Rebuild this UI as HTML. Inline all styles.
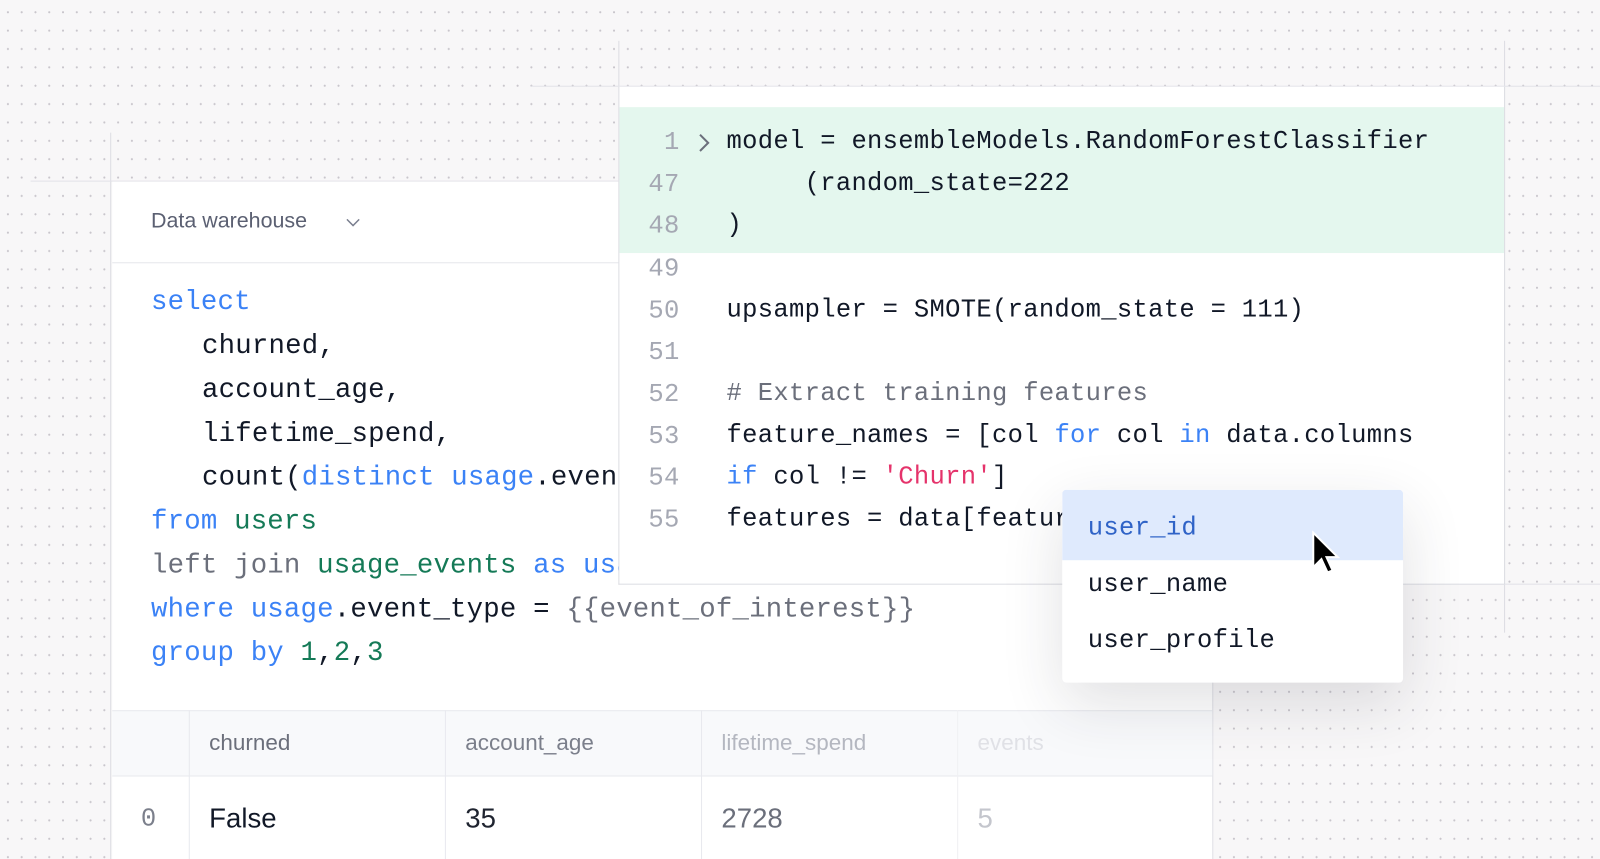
<!DOCTYPE html>
<html><head><style>
*{margin:0;padding:0;box-sizing:border-box}
body{width:1600px;height:859px;overflow:hidden;position:relative;background:#f8f7f8}
#w{position:absolute;left:0;top:0;width:1568px;height:842px;transform:scale(1.0204);transform-origin:0 0;background-color:#f8f7f8;
background-image:radial-gradient(circle,#c9c6cc 0.9px,transparent 1.2px);background-size:13.5px 18px;background-position:1px 3px;
font-family:"Liberation Mono",monospace;overflow:hidden}
.p{position:absolute;background:#fff}
.m{font-family:"Liberation Mono",monospace;font-size:25px;white-space:pre;position:absolute;color:#111827;letter-spacing:0.3px}
.L{font-size:26.8px;letter-spacing:0.2px}
.s{font-family:"Liberation Sans",sans-serif}
.b{color:#3b82f6}.g{color:#157a57}.gr{color:#6b6f7b}.pk{color:#e5336b}
.ln{color:#a5a8b3;width:50px;text-align:right;left:616px}
.vl{position:absolute;background:#dcdde3}
</style></head><body><div id="w">
<div class="vl" style="left:606px;top:40px;width:1px;height:46px"></div>
<div class="vl" style="left:1474px;top:40px;width:1px;height:580px"></div>
<div class="vl" style="left:520px;top:84px;width:1080px;height:1px;background:#e2e2e8"></div>
<div class="vl" style="left:108px;top:130px;width:1px;height:729px"></div>
<div class="vl" style="left:30px;top:177px;width:580px;height:1px;background:#e2e2e8"></div>
<div class="vl" style="left:1188px;top:572px;width:1px;height:287px"></div>
<div class="vl" style="left:1188px;top:572px;width:412px;height:1px;background:#e2e2e8"></div>

<div class="p" style="left:110px;top:178px;width:1078px;height:681px">
 <div style="position:absolute;left:0;top:0;width:100%;height:80px;border-bottom:1px solid #e6e7ec"></div>
 <div class="s" style="position:absolute;left:38px;top:27px;font-size:21px;color:#5b6072">Data warehouse</div>
 <svg style="position:absolute;left:228px;top:34px" width="16" height="12"><path d="M2 3l6 6 6-6" fill="none" stroke="#7a7f8f" stroke-width="1.5"/></svg>
 <div style="position:absolute;left:0;top:518px;width:100%;height:65px;background:#f8f9fb;border-top:1px solid #e8e9ee;border-bottom:1px solid #e8e9ee"></div>
 <div style="position:absolute;left:75px;top:518px;width:1px;height:163px;background:#e8e9ee"></div>
 <div style="position:absolute;left:326px;top:518px;width:1px;height:163px;background:#e8e9ee"></div>
 <div style="position:absolute;left:577px;top:518px;width:1px;height:163px;background:#e8e9ee"></div>
 <div style="position:absolute;left:828px;top:518px;width:1px;height:163px;background:#f0f0f3"></div>
 <div class="s" style="position:absolute;top:537px;left:95px;font-size:22px;color:#6b6f7b">churned</div>
 <div class="s" style="position:absolute;top:537px;left:346px;font-size:22px;color:#7b7f8b">account_age</div>
 <div class="s" style="position:absolute;top:537px;left:597px;font-size:22px;color:#b4b7c0">lifetime_spend</div>
 <div class="s" style="position:absolute;top:537px;left:848px;font-size:22px;color:#e0e1e6">events</div>
 <div class="m" style="top:610px;left:28px;color:#7b7f8b">0</div>
 <div class="s" style="position:absolute;top:609px;left:95px;font-size:27px;color:#111827">False</div>
 <div class="s" style="position:absolute;top:609px;left:346px;font-size:27px;color:#1f2430">35</div>
 <div class="s" style="position:absolute;top:609px;left:597px;font-size:27px;color:#6b6f7b">2728</div>
 <div class="s" style="position:absolute;top:609px;left:848px;font-size:27px;color:#c4c6cd">5</div>
</div>
<div class="m L b" style="left:148px;top:282px">select</div>
<div class="m L" style="left:198px;top:325px">churned,</div>
<div class="m L" style="left:198px;top:368px">account_age,</div>
<div class="m L" style="left:198px;top:411px">lifetime_spend,</div>
<div class="m L" style="left:198px;top:454px">count(<span class="b">distinct usage</span>.events</div>
<div class="m L" style="left:148px;top:497px"><span class="b">from</span> <span class="g">users</span></div>
<div class="m L gr" style="left:148px;top:540px">left join <span class="g">usage_events</span> <span class="b">as usage</span></div>
<div class="m L" style="left:148px;top:583px"><span class="b">where usage</span>.event_type = <span class="gr">{{event_of_interest}}</span></div>
<div class="m L" style="left:148px;top:626px"><span class="b">group by</span> <span class="g">1</span>,<span class="g">2</span>,<span class="g">3</span></div>

<div class="p" style="left:606px;top:85px;width:869px;height:488px;border:1px solid #dcdde3;border-top:none;overflow:hidden">
 <div style="position:absolute;left:0;top:20px;width:100%;height:143px;background:#e4f7ee"></div>
</div>
<div class="m ln" style="top:125px">1</div>
<svg style="position:absolute;left:683px;top:130px" width="14" height="20"><path d="M3 2l8 8-8 8" fill="none" stroke="#6b6f7b" stroke-width="2"/></svg>
<div class="m" style="left:712px;top:124px">model = ensembleModels.RandomForestClassifier</div>
<div class="m ln" style="top:166px">47</div><div class="m" style="left:712px;top:165px">     (random_state=222</div>
<div class="m ln" style="top:207px">48</div><div class="m" style="left:712px;top:206px">)</div>
<div class="m ln" style="top:249px">49</div>
<div class="m ln" style="top:290px">50</div><div class="m" style="left:712px;top:289px">upsampler = SMOTE(random_state = 111)</div>
<div class="m ln" style="top:331px">51</div>
<div class="m ln" style="top:372px">52</div><div class="m gr" style="left:712px;top:371px"># Extract training features</div>
<div class="m ln" style="top:413px">53</div><div class="m" style="left:712px;top:412px">feature_names = [col <span class="b">for</span> col <span class="b">in</span> data.columns</div>
<div class="m ln" style="top:454px">54</div><div class="m" style="left:712px;top:453px"><span class="b">if</span> col != <span class="pk">'Churn'</span>]</div>
<div class="m ln" style="top:495px">55</div><div class="m" style="left:712px;top:494px">features = data[features]</div>

<div style="position:absolute;left:1041px;top:480px;width:334px;height:189px;background:#fff;border-radius:4px;box-shadow:0 20px 60px rgba(40,40,60,0.14);overflow:hidden">
 <div style="position:absolute;left:0;top:0;width:100%;height:69px;background:#dfeafd"></div>
</div>
<div class="m" style="left:1066px;top:503px;color:#2f63c7">user_id</div>
<div class="m" style="left:1066px;top:558px">user_name</div>
<div class="m" style="left:1066px;top:613px">user_profile</div>
<svg style="position:absolute;left:1284px;top:520px" width="30" height="50"><path d="M3 2v34l8-8 6 13 5-2-6-13h11z" fill="#000" stroke="#fff" stroke-width="2"/></svg>
</div></body></html>
